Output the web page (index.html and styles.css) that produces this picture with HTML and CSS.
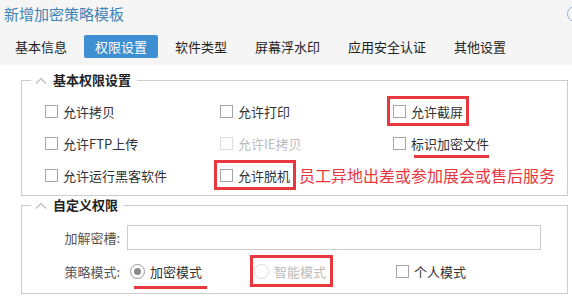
FILE: index.html
```html
<!DOCTYPE html>
<html lang="zh-CN">
<head>
  <meta charset="UTF-8">
  <meta name="viewport" content="width=device-width, initial-scale=1.0">
  <title>新增加密策略模板</title>
  <link rel="stylesheet" href="styles.css">
</head>
<body>
  <header class="top">
    <div class="title-bar">
      <h1>新增加密策略模板</h1>
      <span class="close"></span>
    </div>
    <nav class="tabs">
      <a class="tab">基本信息</a>
      <a class="tab active">权限设置</a>
      <a class="tab">软件类型</a>
      <a class="tab">屏幕浮水印</a>
      <a class="tab">应用安全认证</a>
      <a class="tab">其他设置</a>
    </nav>
  </header>

  <main class="panel">
    <fieldset class="group">
      <legend>
        <svg class="caret" width="12" height="7" viewBox="0 0 12 7"><path d="M1 6.5 L6 1.5 L11 6.5" fill="none" stroke="#bbb" stroke-width="1.2"/></svg>
        基本权限设置
      </legend>
      <div class="check-grid">
        <div class="cell"><label class="check"><span class="box"></span>允许拷贝</label></div>
        <div class="cell"><label class="check"><span class="box"></span>允许打印</label></div>
        <div class="cell"><label class="check mark"><span class="box"></span>允许截屏</label></div>

        <div class="cell"><label class="check"><span class="box"></span>允许FTP上传</label></div>
        <div class="cell"><label class="check disabled"><span class="box"></span>允许IE拷贝</label></div>
        <div class="cell"><label class="check under-file"><span class="box"></span>标识加密文件</label></div>

        <div class="cell"><label class="check"><span class="box"></span>允许运行黑客软件</label></div>
        <div class="cell">
          <label class="check mark"><span class="box"></span>允许脱机</label>
          <span class="note">员工异地出差或参加展会或售后服务</span>
        </div>
        <div class="cell"></div>
      </div>
    </fieldset>

    <fieldset class="group custom">
      <legend>
        <svg class="caret" width="12" height="7" viewBox="0 0 12 7"><path d="M1 6.5 L6 1.5 L11 6.5" fill="none" stroke="#bbb" stroke-width="1.2"/></svg>
        自定义权限
      </legend>
      <div class="form-row">
        <span class="field-label">加解密槽:</span>
        <input class="text-input" type="text">
      </div>
      <div class="form-row mode-row">
        <span class="field-label">策略模式:</span>
        <div class="modes">
          <label class="check under-mode"><span class="radio checked"></span>加密模式</label>
          <label class="check mark mode-mark disabled"><span class="radio"></span>智能模式</label>
          <label class="check plain"><span class="box"></span>个人模式</label>
        </div>
      </div>
    </fieldset>
  </main>
</body>
</html>
```

FILE: styles.css
```css
body {
  margin: 0;
  font-family: "Noto Sans CJK SC", "Liberation Sans", sans-serif;
  font-size: 13px;
  color: #333;
  background: #fff;
  overflow: hidden;
}

.top {
  background: #f5f5f5;
  height: 65px;
}

.title-bar {
  display: flex;
  align-items: center;
  padding: 4px 0 0 4px;
}

.title-bar h1 {
  margin: 0;
  font-size: 15px;
  font-weight: normal;
  line-height: 20px;
  color: #3f84b3;
}

.close {
  margin-left: auto;
  margin-right: -11px;
  width: 14px;
  height: 14px;
  border: 1px solid #9fb3c8;
  border-radius: 50%;
}

.tabs {
  display: flex;
  gap: 6px;
  margin-top: 11px;
  padding-left: 4px;
}

.tab {
  height: 23px;
  line-height: 23px;
  padding: 0 11px;
  border-radius: 2px;
  color: #222;
}

.tab.active {
  background: #3d8fd1;
  color: #fff;
}

.panel {
  padding: 7px 4px 0 21px;
}

.group {
  margin: 0;
  padding: 7px 0 4px 0;
  border: 1px solid #ccc;
  min-width: 0;
}

.group legend {
  display: flex;
  align-items: center;
  gap: 6px;
  height: 16px;
  line-height: 16px;
  margin-left: 9px;
  padding: 0 6px 0 4px;
  font-weight: bold;
  color: #222;
}

.check-grid {
  display: grid;
  grid-template-columns: 175px 173px 1fr;
  grid-auto-rows: 32px;
  align-items: center;
  padding-left: 20px;
}

.cell {
  display: flex;
  align-items: center;
}

.check {
  position: relative;
  display: inline-flex;
  align-items: center;
  gap: 5px;
  height: 24px;
  padding: 0 3px;
  white-space: nowrap;
}

.box {
  width: 11px;
  height: 11px;
  border: 1px solid #a6a6a6;
  background: #fff;
}

.check.disabled {
  color: #bbb;
}

.check.disabled .box,
.check.disabled .radio {
  border-color: #ddd;
}

.mark {
  outline: 3px solid #e8383d;
}

.note {
  margin-left: 6px;
  font-size: 16px;
  color: #e8383d;
  white-space: nowrap;
}

.under-file::after,
.under-mode::after {
  content: "";
  position: absolute;
  height: 3px;
  background: #e8383d;
}

.under-file::after {
  left: 24px;
  right: 3px;
  bottom: -3px;
}

/* custom permissions */
.custom {
  margin-top: 1px;
  padding: 12px 0 6px 0;
}

.form-row {
  display: flex;
  align-items: center;
  gap: 5px;
}

.field-label {
  width: 100px;
  padding-right: 2px;
  box-sizing: border-box;
  text-align: right;
  color: #555;
}

.text-input {
  width: 414px;
  height: 25px;
  box-sizing: border-box;
  margin: 0;
  border: 1px solid #ccc;
  background: #fff;
}

.mode-row {
  margin-top: 5px;
  height: 32px;
}

.modes {
  display: grid;
  grid-template-columns: 123px 143px auto;
  align-items: center;
  justify-items: start;
  margin-left: 3px;
}

.modes .check {
  padding: 0;
  height: 26px;
}

.modes .mode-mark {
  padding: 0 4px 0 1px;
}

.under-mode::after {
  left: 4px;
  right: -5px;
  bottom: -5px;
}

.radio {
  display: flex;
  align-items: center;
  justify-content: center;
  width: 13px;
  height: 13px;
  border: 1px solid #999;
  border-radius: 50%;
  background: #fff;
}

.radio.checked::after {
  content: "";
  width: 7px;
  height: 7px;
  border-radius: 50%;
  background: #8a8a8a;
}
```
